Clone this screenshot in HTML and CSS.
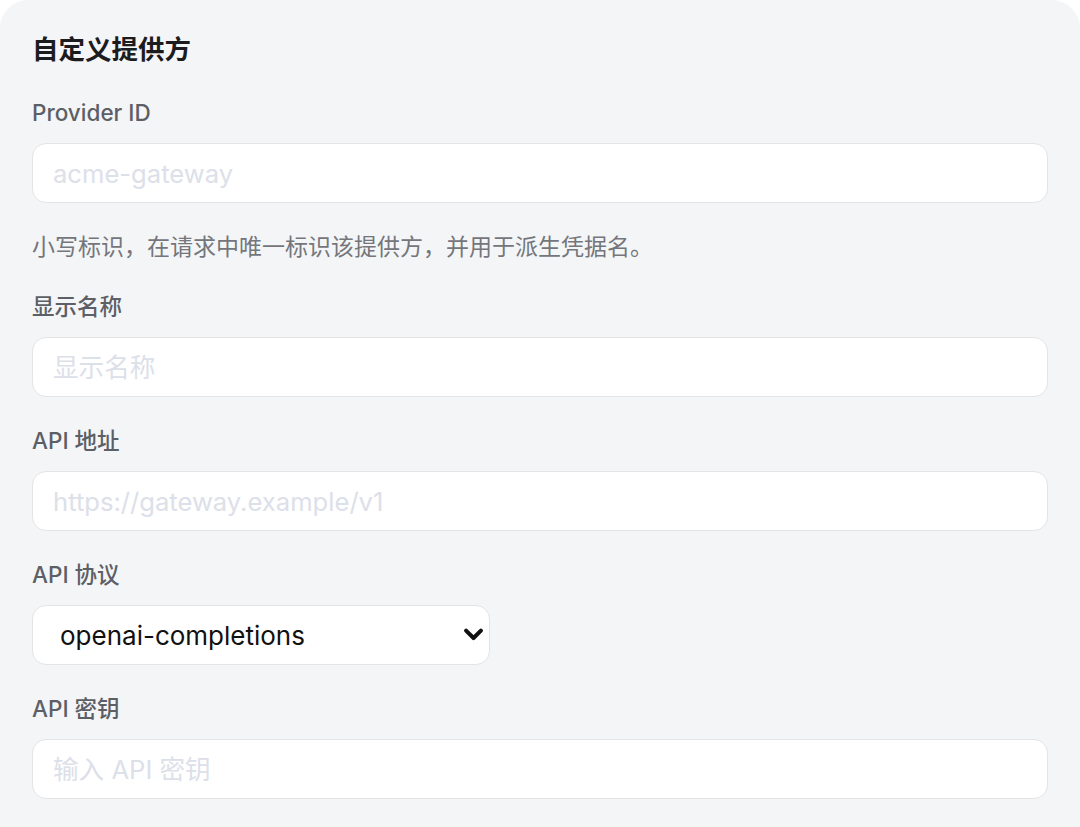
FILE: index.html
```html
<!DOCTYPE html>
<html lang="zh-CN">
<head>
    <meta charset="UTF-8">
    <meta name="viewport" content="width=device-width, initial-scale=1.0">
    <title>自定义提供方</title>
    <link rel="stylesheet" href="styles.css">
</head>
<body>

    <section class="panel">
        <h2 class="panel-title">自定义提供方</h2>

        <div class="field">
            <label class="field-label" for="provider-id">Provider ID</label>
            <input class="field-input" id="provider-id" type="text" placeholder="acme-gateway">
            <p class="field-help">小写标识，在请求中唯一标识该提供方，并用于派生凭据名。</p>
        </div>

        <div class="field">
            <label class="field-label" for="display-name">显示名称</label>
            <input class="field-input" id="display-name" type="text" placeholder="显示名称">
        </div>

        <div class="field">
            <label class="field-label" for="base-url">API 地址</label>
            <input class="field-input" id="base-url" type="text" placeholder="https://gateway.example/v1">
        </div>

        <div class="field">
            <label class="field-label" for="api-protocol">API 协议</label>
            <div class="select-wrap">
                <select class="field-select" id="api-protocol">
                    <option>openai-completions</option>
                    <option>openai-responses</option>
                    <option>anthropic-messages</option>
                </select>
                <!-- flecha del select -->
                <svg class="select-arrow" viewBox="0 0 24 24" width="21" height="21" aria-hidden="true">
                    <path d="M3.5 7.5l8.5 8.5 8.5-8.5" fill="none" stroke="#111" stroke-width="4.6" stroke-linecap="round" stroke-linejoin="round"/>
                </svg>
            </div>
        </div>

        <div class="field">
            <label class="field-label" for="api-key">API 密钥</label>
            <input class="field-input" id="api-key" type="password" placeholder="输入 API 密钥">
        </div>
    </section>

</body>
</html>
```

FILE: styles.css
```css
body {
    margin: 0;
    background: #fff;
    font-family: Inter, "Noto Sans CJK SC", sans-serif;
}
.panel {
    background: #f4f5f7;
    border-radius: 28px 28px 0 0;
    min-height: 827px;
    padding: 30px 32px 40px;
    box-sizing: border-box;
}
.panel-title {
    margin: 0 0 29px;
    font-size: 26.5px;
    line-height: 38px;
    font-weight: 600;
    color: #1c1c1e;
}
.field {
    margin-bottom: 28px;
}
.field-label {
    display: block;
    margin-bottom: 14px;
    font-size: 22.5px;
    line-height: 32px;
    font-weight: 500;
    color: #5c5f65;
}
.field-input,
.field-select {
    display: block;
    box-sizing: border-box;
    height: 60px;
    background: #fff;
    border: 1.5px solid #e3e4e6;
    border-radius: 14px;
    font-family: inherit;
    font-size: 25.6px;
    color: #111;
    outline: none;
}
.field-input {
    width: 100%;
    padding: 0 20px;
}
.field-input::placeholder {
    color: #dce0e9;
}
.field-help {
    margin: 28px 0 0;
    font-size: 23px;
    line-height: 32px;
    color: #74767b;
}
.select-wrap {
    position: relative;
    width: 458px;
}
.field-select {
    width: 100%;
    padding: 0 60px 0 27px;
    font-size: 26px;
    appearance: none;
    -webkit-appearance: none;
}
.select-arrow {
    position: absolute;
    right: 6px;
    top: 19px;
    pointer-events: none;
}
```
